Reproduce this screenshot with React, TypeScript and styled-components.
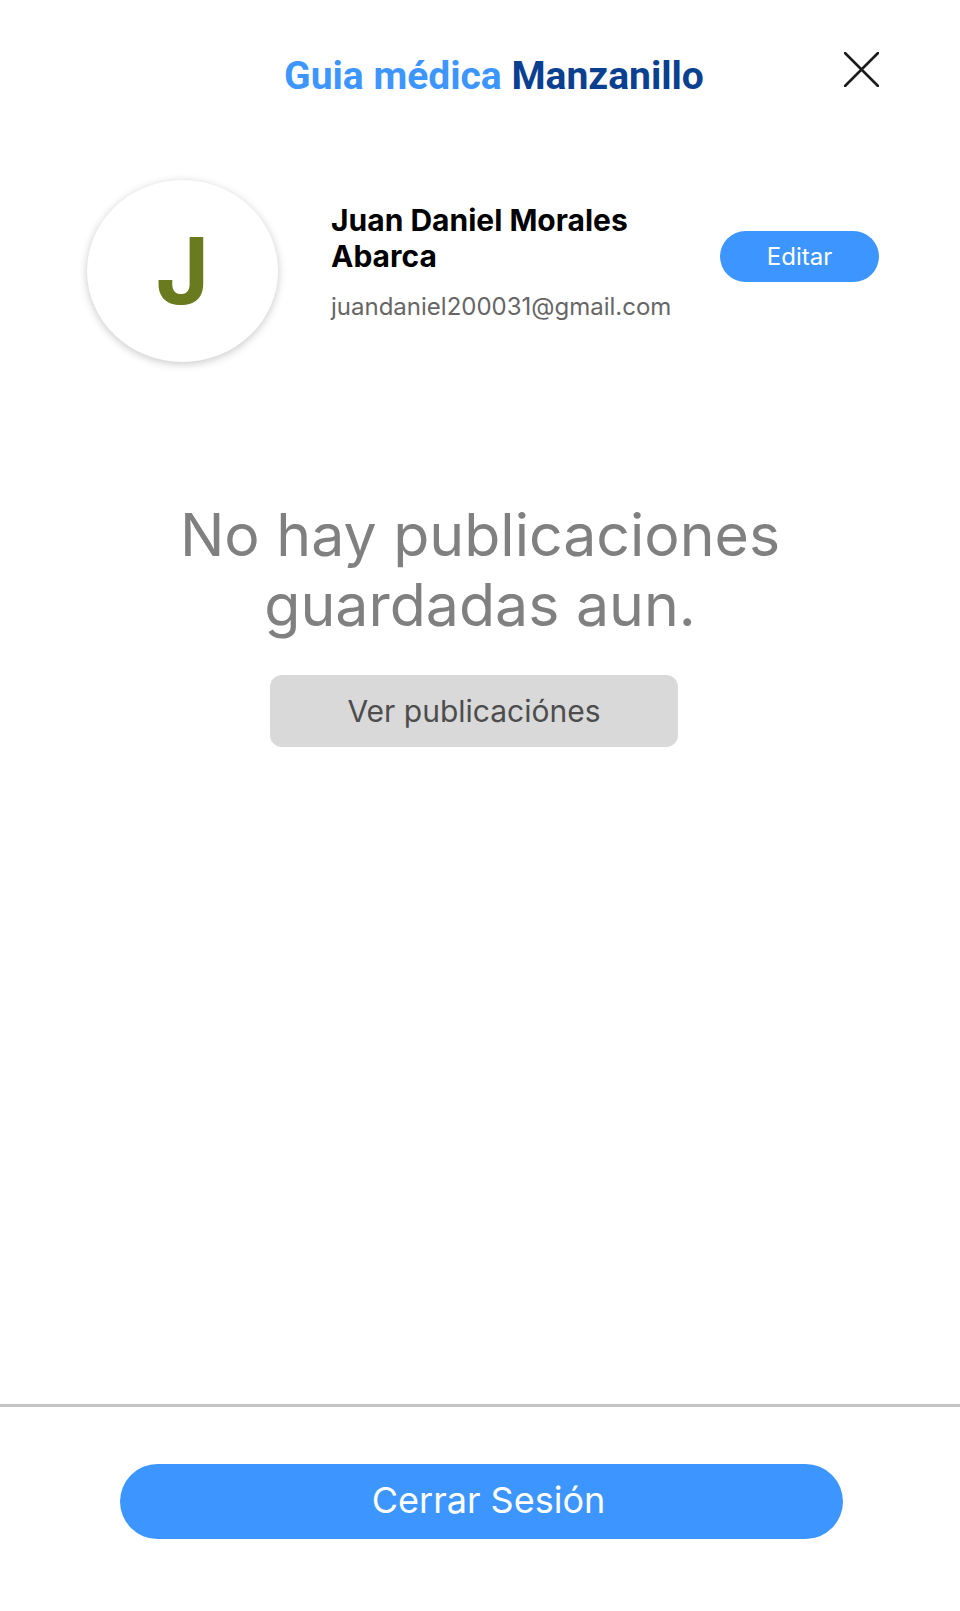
import React from "react";
import styled, { createGlobalStyle } from "styled-components";

const GlobalStyle = createGlobalStyle`
  html, body {
    margin: 0;
    padding: 0;
    background: #ffffff;
  }
  body {
    font-family: Inter, "Noto Sans", sans-serif;
  }
  * { box-sizing: border-box; }
`;

const Page = styled.div`
  min-height: 1611px;
  width: 960px;
  display: flex;
  flex-direction: column;
  background: #ffffff;
`;

const Header = styled.header`
  display: grid;
  grid-template-columns: 1fr auto 1fr;
  align-items: center;
  padding: 52px 81px 0 109px;
`;

const Title = styled.h1`
  grid-column: 2;
  margin: 0;
  font-family: Roboto, "Liberation Sans", sans-serif;
  font-weight: 700;
  font-size: 39px;
  line-height: 44px;
  white-space: nowrap;
  transform: translateY(2px);
`;

const TitleAccent = styled.span<{ $dark?: boolean }>`
  color: ${(p) => (p.$dark ? "#0b3f8f" : "#3d96ff")};
`;

const CloseButton = styled.button`
  grid-column: 3;
  justify-self: end;
  align-self: start;
  width: 35px;
  height: 35px;
  padding: 0;
  border: none;
  background: transparent;
  display: flex;
  align-items: center;
  justify-content: center;
  cursor: pointer;
`;

const Profile = styled.section`
  display: flex;
  align-items: flex-start;
  padding: 0 81px 0 87px;
  margin-top: 84px;
`;

const Avatar = styled.div`
  flex: none;
  width: 191px;
  height: 182px;
  border-radius: 50%;
  background: #ffffff;
  box-shadow: 0 2px 8px rgba(0, 0, 0, 0.22);
  display: flex;
  align-items: center;
  justify-content: center;
  font-family: Inter, sans-serif;
  font-weight: 700;
  font-size: 92px;
  line-height: 1;
  color: #6a7a1f;
`;

const Info = styled.div`
  flex: 1;
  margin: 22px 0 0 53px;
  display: flex;
  flex-direction: column;
`;

const Name = styled.div`
  font-family: Inter, sans-serif;
  font-weight: 700;
  font-size: 30px;
  line-height: 36px;
  color: #000000;
  max-width: 320px;
`;

const Email = styled.div`
  margin-top: 18px;
  font-family: Inter, sans-serif;
  font-size: 24px;
  line-height: 30px;
  color: #666666;
`;

const EditButton = styled.button`
  flex: none;
  margin-top: 51px;
  width: 159px;
  height: 51px;
  border: none;
  border-radius: 26px;
  background: #3d96ff;
  color: #ffffff;
  font-family: Inter, sans-serif;
  font-size: 24px;
  cursor: pointer;
`;

const Empty = styled.section`
  display: flex;
  flex-direction: column;
  align-items: center;
  margin-top: 138px;
`;

const EmptyTitle = styled.h2`
  margin: 0;
  font-family: Inter, sans-serif;
  font-weight: 400;
  font-size: 59px;
  line-height: 70px;
  color: #808080;
  text-align: center;
  max-width: 680px;
`;

const SecondaryButton = styled.button`
  margin-top: 35px;
  margin-right: 12px;
  width: 408px;
  height: 72px;
  border: none;
  border-radius: 12px;
  background: #d9d9d9;
  color: #4d4d4d;
  font-family: Inter, sans-serif;
  font-size: 30px;
  cursor: pointer;
`;

const Spacer = styled.div`
  flex: 1;
`;

const Footer = styled.footer`
  border-top: 3px solid #c4c4c4;
  padding: 57px 117px 72px 120px;
  display: flex;
`;

const LogoutButton = styled.button`
  flex: 1;
  height: 75px;
  padding: 0 0 4px 14px;
  border: none;
  border-radius: 38px;
  background: #3d96ff;
  color: #ffffff;
  font-family: Inter, sans-serif;
  font-size: 36px;
  cursor: pointer;
`;

export default function App() {
  return (
    <>
      <GlobalStyle />
      <Page>
        <Header>
          <Title>
            <TitleAccent>Guia médica</TitleAccent>{" "}
            <TitleAccent $dark>Manzanillo</TitleAccent>
          </Title>
          <CloseButton aria-label="Cerrar">
            <svg width="35" height="35" viewBox="0 0 35 35" fill="none">
              <path d="M1 1 L34 34 M34 1 L1 34" stroke="#1c1c1c" strokeWidth="2.6" strokeLinecap="round" />
            </svg>
          </CloseButton>
        </Header>

        <Profile>
          <Avatar>J</Avatar>
          <Info>
            <Name>Juan Daniel Morales Abarca</Name>
            <Email>juandaniel200031@gmail.com</Email>
          </Info>
          <EditButton>Editar</EditButton>
        </Profile>

        <Empty>
          <EmptyTitle>
            No hay publicaciones
            <br />
            guardadas aun.
          </EmptyTitle>
          <SecondaryButton>Ver publicaciónes</SecondaryButton>
        </Empty>

        <Spacer />

        <Footer>
          <LogoutButton>Cerrar Sesión</LogoutButton>
        </Footer>
      </Page>
    </>
  );
}
